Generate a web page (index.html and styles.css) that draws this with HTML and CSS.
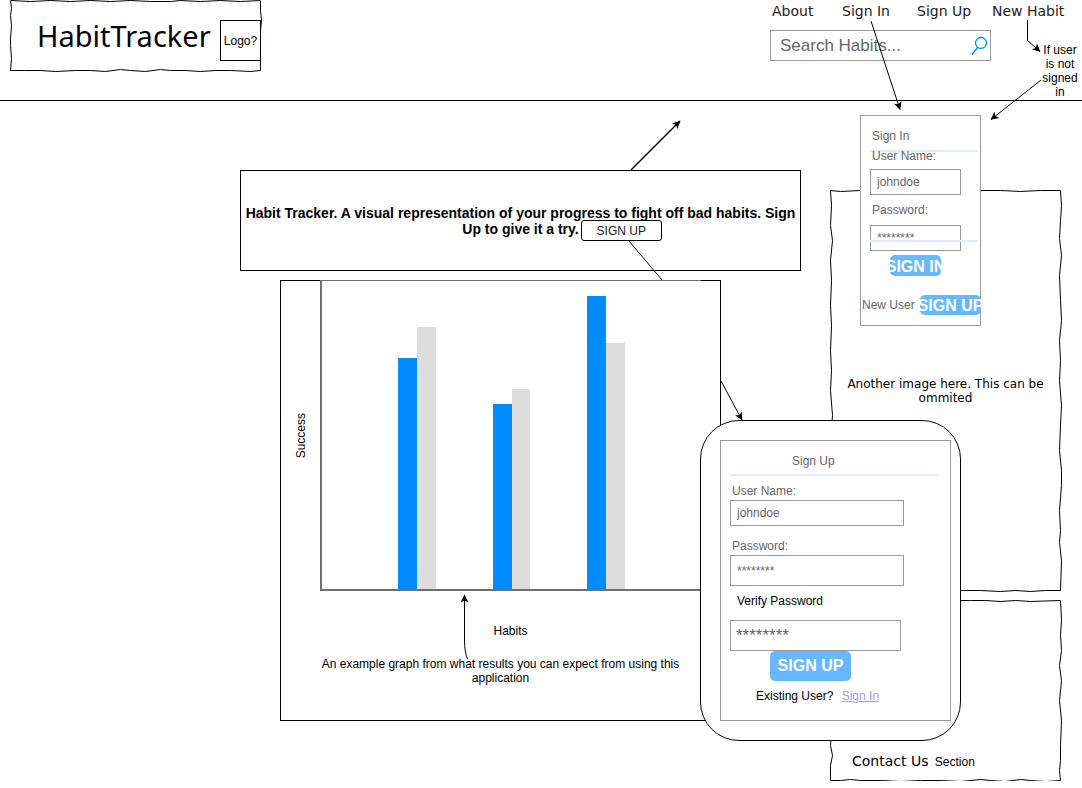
FILE: index.html
```html
<!DOCTYPE html>
<html lang="en">
<head>
<meta charset="utf-8">
<title>HabitTracker</title>
<link rel="stylesheet" href="styles.css">
</head>
<body>
<div class="page">
  <header class="header">
    <div class="brand">
      <svg class="sketch" viewBox="0 0 251 71" preserveAspectRatio="none" aria-hidden="true"><path d="M0 0L20 1L40 0L60 1L80 0L100 1L120 0L140 1L160 1L170 0L190 1L210 0L230 1L250 0L250 10L251 20L250 30L250 70L240 71L220 70L205 70L190 71L175 70L160 70L150 69L135 71L120 70L110 69L95 71L80 70L65 70L45 71L30 70L15 70L0 70L1 58L0 45L0 38L1 25L0 15L1 8Z"/></svg>
      <h1 class="brand-name">HabitTracker</h1>
      <div class="logo">Logo?</div>
    </div>
    <div class="tools">
      <nav class="nav">
        <a href="#about">About</a>
        <a href="#sign-in">Sign In</a>
        <a href="#sign-up">Sign Up</a>
        <a href="#new-habit">New Habit</a>
      </nav>
      <form class="search">
        <input class="search-input" type="search" placeholder="Search Habits..." aria-label="Search Habits">
        <button class="search-button" type="button" aria-label="Search">
          <svg width="18" height="20" viewBox="0 0 18 20" aria-hidden="true"><circle cx="11" cy="7" r="5.5"/><path d="M7.500 11.500L2 18.500"/></svg>
        </button>
      </form>
    </div>
  </header>

  <main class="main">
    <div class="content">
      <section class="hero">
        <p class="hero-text">Habit Tracker. A visual representation of your progress to fight off bad habits. Sign Up to give it a try.<button class="hero-button" type="button">SIGN UP</button></p>
      </section>
      <section class="chart">
        <div class="chart-row">
          <div class="axis-y"><span>Success</span></div>
          <div class="plot">
            <div class="pair"><i class="bar" style="height:75%"></i><i class="bar bar-grey" style="height:85%"></i></div>
            <div class="pair"><i class="bar" style="height:60%"></i><i class="bar bar-grey" style="height:65%"></i></div>
            <div class="pair"><i class="bar" style="height:95%"></i><i class="bar bar-grey" style="height:80%"></i></div>
          </div>
        </div>
        <p class="axis-x">Habits</p>
        <p class="caption">An example graph from what results you can expect from using this application</p>
      </section>
    </div>
    <aside class="aside">
      <section class="panel panel-image">
        <svg class="sketch" viewBox="0 0 231 401" preserveAspectRatio="none" aria-hidden="true"><path d="M0 0L10 1L30 0L60 1L90 0L120 1L135 1L150 0L170 0L190 1L210 0L230 0L231 15L230 30L229 48L231 65L229 85L230 110L231 130L229 150L230 170L229 190L231 215L230 235L229 260L231 280L231 295L229 320L230 340L229 352L231 370L230 400L215 400L200 401L185 400L170 401L150 400L130 400L110 401L90 400L60 401L30 400L0 401L1 380L0 360L1 340L0 320L1 305L0 285L1 270L0 250L2 225L0 200L1 180L0 160L1 135L0 115L1 90L0 70L2 50L0 35L1 15Z"/></svg>
        <p>Another image here. This can be ommited</p>
      </section>
      <section class="panel panel-contact">
        <svg class="sketch" viewBox="0 0 231 181" preserveAspectRatio="none" aria-hidden="true"><path d="M0 0L30 1L60 0L90 1L120 0L140 0L155 0L170 1L185 0L200 1L230 0L231 20L230 35L231 50L229 65L231 80L229 100L231 120L230 145L230 160L229 170L230 180L215 181L200 180L190 179L175 181L160 180L150 179L130 181L110 180L90 180L70 181L50 180L30 180L20 179L10 180L0 180L0 165L2 155L0 145L1 130L0 110L1 90L0 60L1 30Z"/></svg>
        <p><span class="contact-title">Contact Us</span> <span>Section</span></p>
      </section>
    </aside>
  </main>

  <p class="note">If user is not signed in</p>

  <form class="signin" id="sign-in">
    <h2 class="form-title">Sign In</h2>
    <hr class="rule">
    <label for="in-user">User Name:</label>
    <input class="field" id="in-user" type="text" value="johndoe">
    <label class="label-gap" for="in-pass">Password:</label>
    <input class="field" id="in-pass" type="text" value="********">
    <hr class="rule rule-over">
    <button class="button button-in" type="button"><span>SIGN IN</span></button>
    <div class="new-user"><span>New User</span><button class="button button-new" type="button"><span>SIGN UP</span></button></div>
  </form>

  <div class="signup-card">
    <form class="signup" id="sign-up">
      <h2 class="form-title">Sign Up</h2>
      <hr class="rule">
      <label for="up-user">User Name:</label>
      <input class="field" id="up-user" type="text" value="johndoe">
      <label class="label-gap" for="up-pass">Password:</label>
      <input class="field field-tall" id="up-pass" type="text" value="********">
      <label class="verify" for="up-verify">Verify Password</label>
      <input class="field field-large" id="up-verify" type="text" value="********">
      <button class="button button-up" type="button"><span>SIGN UP</span></button>
      <p class="existing">Existing User? <a href="#sign-in">Sign In</a></p>
    </form>
  </div>

  <svg class="arrows" width="1082" height="788" viewBox="0 0 1082 788" aria-hidden="true">
    <defs>
      <marker id="head" viewBox="0 0 9 8" refX="8" refY="4" markerWidth="9" markerHeight="8" markerUnits="userSpaceOnUse" orient="auto"><path d="M8.500 4L0.500 8L2.500 4L0.500 0Z"/></marker>
    </defs>
    <g fill="none" stroke="#000">
      <path marker-end="url(#head)" d="M871 21L900 109.500"/>
      <path marker-end="url(#head)" d="M1027.500 20V40.500L1040 51.500"/>
      <path marker-end="url(#head)" d="M1041 80L991 119.500"/>
      <path marker-end="url(#head)" stroke-width="1.500" d="M631 170L680 121"/>
      <path d="M629 241L662 280"/>
      <path marker-end="url(#head)" d="M721 381L742 420"/>
      <path marker-end="url(#head)" d="M467.500 659Q464.500 652 464.500 640V595"/>
    </g>
  </svg>
</div>
</body>
</html>
```
FILE: styles.css
```css
* {
  box-sizing: border-box;
}

body {
  margin: 0;
  background: #fff;
  color: #000;
  font: 12px/14px "Liberation Sans", Arial, sans-serif;
}

h1, h2, p {
  margin: 0;
  font-weight: normal;
}

input, button {
  font: inherit;
  border-radius: 0;
  margin: 0;
}

.page {
  position: relative;
}

.sketch {
  position: absolute;
  inset: 0;
  width: 100%;
  height: 100%;
  overflow: visible;
  fill: none;
  stroke: #000;
}

.sketch path {
  vector-effect: non-scaling-stroke;
  transform: translate(0.5px, 0.5px);
}

/* Header */
.header {
  display: flex;
  justify-content: space-between;
  height: 101px;
  padding-left: 10px;
  border-bottom: 1px solid #000;
}

.brand {
  position: relative;
  display: flex;
  align-items: center;
  justify-content: space-between;
  width: 251px;
  height: 71px;
  padding-left: 27px;
}

.brand-name {
  font: 29px/36px "Noto Sans", Verdana, sans-serif;
}

.logo {
  display: grid;
  place-items: center;
  align-self: flex-end;
  width: 41px;
  height: 41px;
  margin-bottom: 10px;
  border: 1px solid #000;
}

.tools {
  width: 312px;
  padding-top: 2px;
}

.nav {
  display: grid;
  grid-template-columns: 70px 75px 75px auto;
  padding-left: 2px;
  font: 14px/18px Verdana, "DejaVu Sans", sans-serif;
}

.nav a {
  color: #222;
  text-decoration: none;
}

.search {
  display: flex;
  width: 221px;
  height: 31px;
  margin-top: 10px;
  border: 1px solid #999;
}

.search-input {
  flex: 1;
  min-width: 0;
  padding: 0 0 0 9px;
  border: 0;
  background: none;
  font-size: 17px;
  appearance: none;
}

.search-input::placeholder {
  color: #666;
}

.search-button {
  padding: 0 2px 0 0;
  border: 0;
  background: none;
  line-height: 0;
}

.search-button svg {
  fill: none;
  stroke: #008cff;
  stroke-width: 1.3;
}

/* Main columns */
.main {
  display: grid;
  grid-template-columns: 1fr 231px;
  gap: 29px;
  padding: 69px 21px 0 240px;
}

.hero {
  display: grid;
  align-content: center;
  height: 101px;
  padding: 0 2px;
  border: 1px solid #000;
}

.hero-text {
  font-size: 14px;
  font-weight: bold;
  line-height: 16px;
  text-align: center;
}

/* The button hangs past the end of the centred line */
.hero-button {
  width: 81px;
  height: 21px;
  padding: 0;
  margin: -3px -83px -5px 2px;
  border: 1px solid #000;
  border-radius: 3px;
  background: #fff;
  color: #222;
  font-size: 12px;
  font-weight: normal;
  vertical-align: middle;
}

.chart {
  height: 441px;
  margin: 9px 80px 0 40px;
  border: 1px solid #000;
}

.chart-row {
  display: flex;
  height: 311px;
  margin-top: -1px;
  padding-right: 19px;
}

.axis-y {
  display: grid;
  place-items: center;
  width: 39px;
}

.axis-y span {
  writing-mode: vertical-rl;
  transform: rotate(180deg);
}

.plot {
  display: grid;
  flex: 1;
  grid-template-columns: 4fr 2fr 3fr 2fr 3fr 2fr 4fr;
  border: solid #707070;
  border-width: 1px 0 2px 2px;
}

.pair {
  display: flex;
  grid-row: 1;
  grid-column: 2;
  align-items: flex-end;
}

.pair:nth-child(2) {
  grid-column: 4;
}

.pair:nth-child(3) {
  grid-column: 6;
}

.bar {
  flex: 1;
  background: #008cff;
}

.bar-grey {
  background: #ddd;
}

.axis-x {
  padding: 33px 0 0 20px;
  text-align: center;
}

.caption {
  padding: 19px 30px 0;
  text-align: center;
}

/* Right column */
.aside {
  display: grid;
  align-content: start;
  gap: 9px;
  padding-top: 20px;
}

.panel {
  position: relative;
}

.panel-image {
  display: grid;
  place-items: center;
  height: 401px;
  padding: 0 10px;
  font: 12px/14px Verdana, "DejaVu Sans", sans-serif;
  text-align: center;
}

.panel-contact {
  display: flex;
  align-items: flex-end;
  height: 181px;
  padding: 0 0 11px 22px;
}

.contact-title {
  margin-right: 3px;
  font: 14px/18px Verdana, "DejaVu Sans", sans-serif;
}

/* Floating pieces */
.note {
  position: absolute;
  top: 43px;
  right: 2px;
  width: 40px;
  text-align: center;
}

.signin, .signup {
  display: flex;
  flex-direction: column;
  align-items: flex-start;
  border: 1px solid #999;
  background: #fff;
  color: #666;
}

.signin {
  position: absolute;
  top: 115px;
  right: 101px;
  width: 121px;
  height: 211px;
  padding: 13px 0 0 9px;
}

.form-title {
  font-size: 12px;
  line-height: 14px;
}

.signin .form-title,
.signin label,
.signup label {
  margin-left: 2px;
}

.rule {
  width: 108px;
  height: 2px;
  margin: 7px 0 0;
  border: 0;
  background: #ddeeff;
}

.signin .rule + label {
  margin-top: -3px;
}

.field {
  width: 91px;
  height: 26px;
  padding: 0 6px;
  border: 1px solid #999;
  background: #fff;
  color: #666;
}

.signin .field {
  margin-top: 6px;
}

.signin .label-gap {
  margin-top: 8px;
}

.signin .label-gap + .field {
  margin-top: 8px;
}

.rule-over {
  position: absolute;
  top: 117px;
  left: 9px;
}

.button {
  display: flex;
  align-items: center;
  justify-content: center;
  padding: 0;
  overflow: hidden;
  border: 0;
  border-radius: 5px;
  background: #66b8ff;
  color: #fff;
  font-size: 16px;
  font-weight: bold;
  white-space: nowrap;
}

.button-in {
  width: 51px;
  height: 21px;
  margin: 4px 0 0 20px;
}

.new-user {
  display: flex;
  align-items: center;
  align-self: stretch;
  justify-content: space-between;
  margin: 19px -1px 0 -8px;
}

.button-new {
  width: 61px;
  height: 20px;
}

.signin .button {
  padding-top: 2px;
}

.signup-card {
  position: absolute;
  top: 420px;
  right: 121px;
  width: 261px;
  height: 321px;
  padding: 19px 9px 19px 19px;
  border: 1px solid #000;
  border-radius: 39px;
  background: #fff;
}

.signup {
  height: 281px;
  padding: 13px 12px 0 9px;
}

.signup .form-title {
  margin-left: 62px;
}

.signup .rule {
  width: 100%;
  margin-top: 6px;
}

.signup .rule + label {
  margin-top: 8px;
}

.signup .field {
  width: 174px;
  margin-top: 2px;
}

.signup .label-gap {
  margin-top: 13px;
}

.signup .field-tall {
  height: 31px;
}

.signup .verify {
  margin: 8px 0 0 7px;
  color: #000;
}

.signup .field-large {
  width: 171px;
  height: 31px;
  margin-top: 12px;
  padding: 0 5px;
  font-size: 17px;
}

.button-up {
  width: 81px;
  height: 30px;
  margin-left: 40px;
}

.existing {
  margin: 8px 0 0 26px;
  color: #000;
}

.existing a {
  margin-left: 5px;
  color: #9999ff;
}

.arrows {
  position: absolute;
  top: 0;
  right: 0;
  pointer-events: none;
}
```
